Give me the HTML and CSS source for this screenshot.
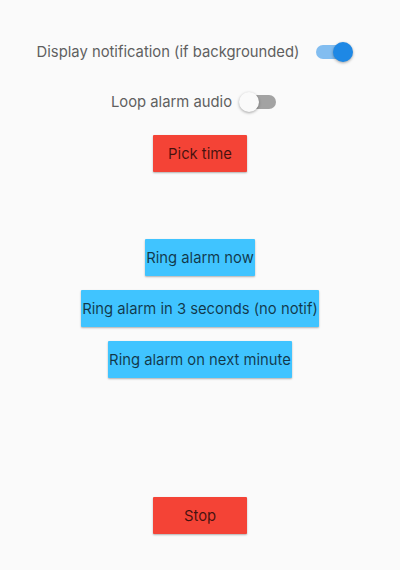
FILE: index.html
```html
<!DOCTYPE html>
<html>
<head>
<meta charset="utf-8">
<link rel="stylesheet" href="styles.css">
</head>
<body>
<div class="page">
  <div class="row row-first">
    <span class="label">Display notification (if backgrounded)</span>
    <span class="switch on"><span class="track"></span><span class="thumb"></span></span>
  </div>
  <div class="row row-second">
    <span class="label">Loop alarm audio</span>
    <span class="switch off"><span class="track"></span><span class="thumb"></span></span>
  </div>
  <button class="btn red btn-pick">Pick time</button>
  <button class="btn blue btn-now">Ring alarm now</button>
  <button class="btn blue btn-3s">Ring alarm in 3 seconds (no notif)</button>
  <button class="btn blue btn-next">Ring alarm on next minute</button>
  <button class="btn red btn-stop">Stop</button>
</div>
</body>
</html>
```
FILE: styles.css
```css
html, body {
  margin: 0;
  padding: 0;
  background: #fafafa;
}
.page {
  width: 400px;
  height: 570px;
  display: flex;
  flex-direction: column;
  align-items: center;
  font-family: Inter, Roboto, "Liberation Sans", sans-serif;
  padding-top: 28px;
  box-sizing: border-box;
}
.row {
  height: 48px;
  display: flex;
  align-items: center;
  gap: 14px;
  margin-right: 10px;
}
.row-second {
  margin-top: 2px;
  gap: 7px;
}
.label {
  font-size: 14.8px;
  color: #5f5f5f;
}
.switch {
  position: relative;
  width: 40px;
  height: 24px;
  display: inline-block;
}
.track {
  position: absolute;
  left: 3px;
  right: 3px;
  top: 5px;
  height: 14px;
  border-radius: 7px;
}
.thumb {
  position: absolute;
  top: 2px;
  width: 20px;
  height: 20px;
  border-radius: 50%;
  box-shadow: 0 1px 3px rgba(0,0,0,0.35);
}
.switch.on .track { background: #82bdf0; }
.switch.on .thumb { right: 0; background: #1e88e5; }
.switch.off .track { background: #a3a3a3; }
.switch.off .thumb { left: 0; background: #fafafa; }
.btn {
  border: none;
  height: 37px;
  padding: 0 1px;
  font-family: Inter, Roboto, "Liberation Sans", sans-serif;
  font-size: 14.8px;
  color: rgba(0,0,0,0.72);
  box-shadow: 0 1px 2px rgba(0,0,0,0.3);
  border-radius: 1px;
}
.red { background: #f44336; }
.blue { background: #40c4ff; }
.btn-pick { margin-top: 9px; min-width: 94px; }
.btn-now { margin-top: 67px; }
.btn-3s { margin-top: 14px; }
.btn-next { margin-top: 14px; }
.btn-stop { margin-top: 119px; min-width: 94px; }
```
